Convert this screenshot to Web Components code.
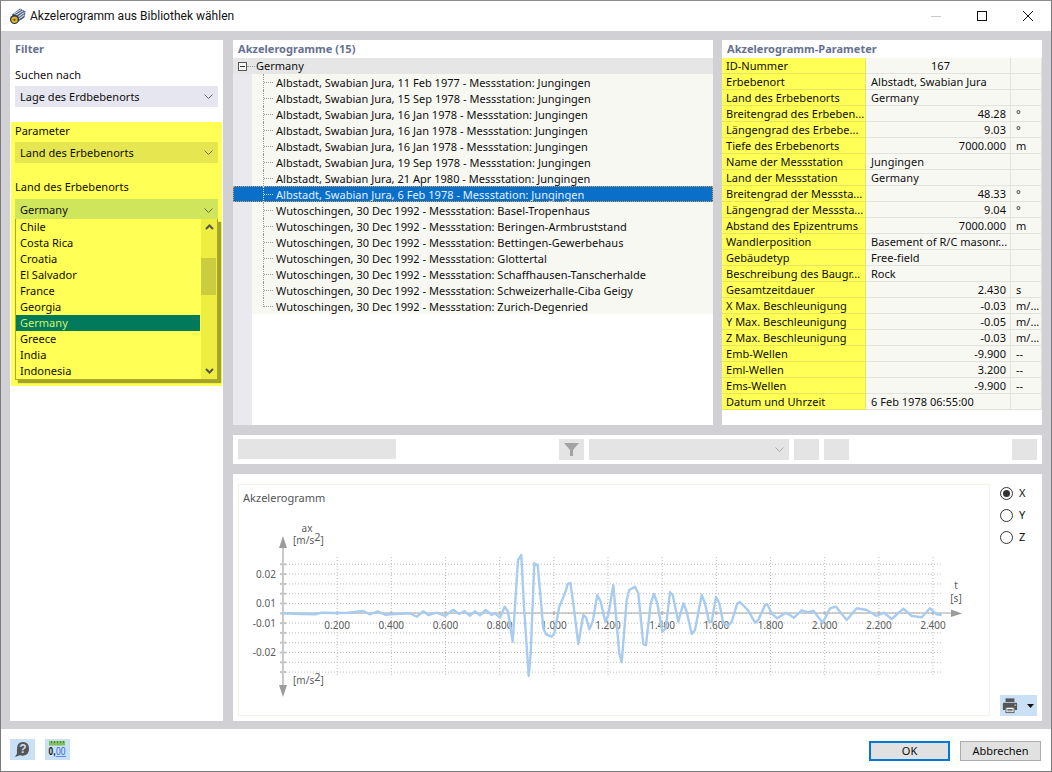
<!DOCTYPE html>
<html lang="de">
<head>
<meta charset="utf-8" />
<title>Akzelerogramm aus Bibliothek wählen</title>
<style>
  html, body { margin: 0; padding: 0; background: #d1d0d5; }
  body { font: 11px/16px "Noto Sans", "Liberation Sans", sans-serif; color: #0e0e0e; letter-spacing: 0.02px; }
</style>
</head>
<body>
<akz-dialog>
  <akz-filter slot="filter"></akz-filter>
  <akz-tree slot="tree"></akz-tree>
  <akz-params slot="params"></akz-params>
  <akz-tools slot="tools"></akz-tools>
  <akz-chart slot="chart"></akz-chart>
  <akz-footer slot="footer"></akz-footer>
</akz-dialog>

<template id="dialog-tpl">
  <style>
    :host { display: flex; flex-direction: column; width: 1052px; height: 772px; box-sizing: border-box;
            border: 1px solid #7b7b7b; border-top-color: #8c8c8c; background: #d1d0d5; overflow: hidden; }
    .title { display: flex; align-items: center; height: 30px; background: #fff; flex: none; }
    .title svg.app { margin: 0 4px 0 8px; }
    .title span { flex: 1; font: 12px Roboto, "Noto Sans", sans-serif; color: #111; }
    .wbtn { width: 46px; height: 30px; display: flex; align-items: center; justify-content: center; }
    .main { flex: 1; display: grid; grid-template-columns: 213px 490px 329px; grid-template-rows: 385px 286px;
            row-gap: 10px; padding: 9px 9px 8px 9px; }
    ::slotted([slot=filter]) { grid-row: 1 / 3; }
    ::slotted([slot=tree]) { margin-left: 10px; }
    ::slotted([slot=params]) { margin-left: 9px; }
    .wide { grid-column: 2 / 4; margin-left: 10px; display: grid; grid-template-rows: 29px 247px; row-gap: 10px; }
  </style>
  <div class="title">
    <svg class="app" width="17" height="17" viewBox="0 0 17 17">
      <path d="M3 6.500L11 .5L16.500 3.500L15.500 9.500L7 15Z" fill="#46597a"/>
      <path d="M5 6L12 1.500M6.500 7.500L14 2.800M8 9.500L15.500 4.500M9.500 11L15.300 7" stroke="#c9d3e2" stroke-width="1.1"/>
      <circle cx="5.500" cy="11.500" r="4.500" fill="#26344a"/>
      <circle cx="5.500" cy="11.800" r="3.200" fill="#e3b225"/>
      <circle cx="5.500" cy="11.800" r="1.100" fill="#5b4a12"/>
    </svg>
    <span>Akzelerogramm aus Bibliothek wählen</span>
    <div class="wbtn"><svg width="10" height="10"><path d="M0 5.500H10" stroke="#c8c8c8"/></svg></div>
    <div class="wbtn"><svg width="10" height="10"><rect x=".5" y=".5" width="9" height="9" fill="none" stroke="#111"/></svg></div>
    <div class="wbtn"><svg width="10" height="10"><path d="M0 0L10 10M10 0L0 10" stroke="#111"/></svg></div>
  </div>
  <div class="main">
    <slot name="filter"></slot>
    <slot name="tree"></slot>
    <slot name="params"></slot>
    <div class="wide">
      <slot name="tools"></slot>
      <slot name="chart"></slot>
    </div>
  </div>
  <slot name="footer"></slot>
</template>

<script>
  const stamp = (host, id) => {
    const shadow = host.attachShadow({ mode: "open" });
    shadow.appendChild(document.getElementById(id).content.cloneNode(true));
    return shadow;
  };
  const chevron = '<svg width="9" height="5" viewBox="0 0 9 5"><path d="M.5 .5L4.500 4.500L8.500 .5" fill="none" stroke="currentColor"/></svg>';

  class AkzDialog extends HTMLElement {
    constructor() {
      super();
      stamp(this, "dialog-tpl");
    }
  }

  // dropdown field, background comes from the user via --combo-bg
  class AkzCombo extends HTMLElement {
    constructor() {
      super();
      this.attachShadow({ mode: "open" }).innerHTML = `
        <style>
          :host { display: flex; align-items: center; height: var(--combo-h, 21px); box-sizing: border-box;
                  padding: var(--combo-pt, 0) 5px 0; background: var(--combo-bg, #e6e6f0); }
          .t { flex: 1; white-space: nowrap; }
          .c { color: var(--combo-arrow, #666); display: flex; }
        </style>
        <span class="t"><slot></slot></span><span class="c">${chevron}</span>`;
    }
  }

  class AkzFilter extends HTMLElement {
    constructor() {
      super();
      const countries = ["Chile", "Costa Rica", "Croatia", "El Salvador", "France", "Georgia", "Germany", "Greece", "India", "Indonesia"];
      const items = countries.map(c => `<div class="it ${c === "Germany" ? "sel" : ""}">${c}</div>`).join("");
      this.attachShadow({ mode: "open" }).innerHTML = `
        <style>
          :host { display: block; background: #fff; padding: 0 5px; box-sizing: border-box; }
          .head { height: 17px; font-weight: 700; color: #66718f; line-height: 17px; }
          .lab { height: 16px; margin-bottom: 3px; }
          .first { margin-top: 10px; }
          .hi { background: #ffff55; margin: 15px -4px 0; padding: 1px 4px 0; height: 264px; box-sizing: border-box; }
          .hi .second { margin-top: 16px; margin-bottom: 4px; }
          .y1 { --combo-bg: #e6e650; --combo-arrow: #77772a; }
          .y2 { --combo-bg: #cfe65c; --combo-arrow: #66702a; --combo-h: 20px; --combo-pt: 2px; }
          .list { display: flex; height: 161px; box-sizing: border-box; border: 1px solid #a9a930; border-top: 0;
                  box-shadow: 3px 3px 1px #a3a32a; background: #ffff55; }
          .items { flex: 1; }
          .it { height: 16px; padding-left: 4px; margin-right: 1px; }
          .it.sel { background: #007a5a; color: #d8ef6a; }
          .bar { width: 16px; background: #eeee40; display: flex; flex-direction: column; align-items: center; position: relative; }
          .thumb { position: absolute; left: 0; right: 1px; top: 39px; height: 37px; background: #cccc40; }
          .ar { height: 16px; display: flex; align-items: center; position: relative; }
          .sp { flex: 1; }
        </style>
        <div class="head">Filter</div>
        <div class="lab first">Suchen nach</div>
        <akz-combo>Lage des Erdbebenorts</akz-combo>
        <div class="hi">
          <div class="lab">Parameter</div>
          <akz-combo class="y1">Land des Erbebenorts</akz-combo>
          <div class="lab second">Land des Erbebenorts</div>
          <akz-combo class="y2">Germany</akz-combo>
          <div class="list">
            <div class="items">${items}</div>
            <div class="bar">
              <div class="thumb"></div>
              <div class="ar"><svg width="9" height="6" viewBox="0 0 9 6"><path d="M1 5L4.500 1.500L8 5" fill="none" stroke="#555" stroke-width="2"/></svg></div>
              <div class="sp"></div>
              <div class="ar"><svg width="9" height="6" viewBox="0 0 9 6"><path d="M1 1L4.500 4.500L8 1" fill="none" stroke="#555" stroke-width="2"/></svg></div>
            </div>
          </div>
        </div>`;
    }
  }

  class AkzTree extends HTMLElement {
    constructor() {
      super();
      const a = "Albstadt, Swabian Jura, ";
      const w = "Wutoschingen, 30 Dec 1992 - Messstation: ";
      const j = " - Messstation: Jungingen";
      const rows = [
        a + "11 Feb 1977" + j, a + "15 Sep 1978" + j, a + "16 Jan 1978" + j, a + "16 Jan 1978" + j,
        a + "16 Jan 1978" + j, a + "19 Sep 1978" + j, a + "21 Apr 1980" + j, a + "6 Feb 1978" + j,
        w + "Basel-Tropenhaus", w + "Beringen-Armbruststand", w + "Bettingen-Gewerbehaus", w + "Glottertal",
        w + "Schaffhausen-Tanscherhalde", w + "Schweizerhalle-Ciba Geigy", w + "Zurich-Degenried"
      ];
      const html = rows.map((r, i) => `
        <div class="row ${i === 7 ? "sel" : ""} ${i === rows.length - 1 ? "last" : ""}">
          <div class="gut"></div>
          <div class="cell"><i class="con"></i><span>${r}</span></div>
        </div>`).join("");
      this.attachShadow({ mode: "open" }).innerHTML = `
        <style>
          :host { display: flex; flex-direction: column; background: #fff; }
          .head { height: 18px; line-height: 18px; font-weight: 700; color: #66718f; padding-left: 5px; flex: none; }
          .root { height: 16px; line-height: 18px; background: #e6e6e6; display: flex; align-items: center; flex: none; }
          .box { width: 9px; height: 9px; box-sizing: border-box; border: 1px solid #555; margin-left: 5px; display: flex; align-items: center; justify-content: center; background: #f4f4f4; }
          .box::after { content: ""; width: 5px; height: 1px; background: #333; }
          .dots { width: 8px; border-top: 1px dotted #999; margin-right: 1px; }
          .row { display: flex; height: 16px; line-height: 18px; flex: none; white-space: nowrap; }
          .gut { width: 19px; background: #e9e9ee; flex: none; }
          .cell { flex: 1; background: #f8f8f3; display: flex; }
          .con { display: block; width: 10px; height: 16px; margin-left: 11px; margin-right: 3px; flex: none; border-left: 1px dotted #999; box-sizing: border-box; position: relative; }
          .con::after { content: ""; position: absolute; left: 0; right: 0; top: 8px; border-top: 1px dotted #999; }
          .last .con { height: 9px; }
          .sel { outline: 1px dotted #e0a050; outline-offset: -1px; }
          .sel .gut, .sel .cell { background: #0a6fc9; }
          .sel span { color: #e4f0ff; }
          .sel .con, .sel .con::after { border-color: #cfe2f6; }
          .fill { flex: 1; display: flex; }
        </style>
        <div class="head">Akzelerogramme (15)</div>
        <div class="root"><span class="box"></span><span class="dots"></span><span>Germany</span></div>
        ${html}
        <div class="fill"><div class="gut"></div></div>`;
    }
  }

  class AkzParams extends HTMLElement {
    constructor() {
      super();
      const data = [
        ["ID-Nummer", "167", "", "c"], ["Erbebenort", "Albstadt, Swabian Jura", "", "l"], ["Land des Erbebenorts", "Germany", "", "l"],
        ["Breitengrad des Erbeben...", "48.28", "°", "r"], ["Längengrad des Erbebe...", "9.03", "°", "r"], ["Tiefe des Erbebenorts", "7000.000", "m", "r"],
        ["Name der Messstation", "Jungingen", "", "l"], ["Land der Messstation", "Germany", "", "l"],
        ["Breitengrad der Messsta...", "48.33", "°", "r"], ["Längengrad der Messsta...", "9.04", "°", "r"], ["Abstand des Epizentrums", "7000.000", "m", "r"],
        ["Wandlerposition", "Basement of R/C masonr...", "", "l"], ["Gebäudetyp", "Free-field", "", "l"], ["Beschreibung des Baugr...", "Rock", "", "l"],
        ["Gesamtzeitdauer", "2.430", "s", "r"], ["X Max. Beschleunigung", "-0.03", "m/...", "r"], ["Y Max. Beschleunigung", "-0.05", "m/...", "r"],
        ["Z Max. Beschleunigung", "-0.03", "m/...", "r"], ["Emb-Wellen", "-9.900", "--", "r"], ["Eml-Wellen", "3.200", "--", "r"],
        ["Ems-Wellen", "-9.900", "--", "r"], ["Datum und Uhrzeit", "6 Feb 1978 06:55:00", "", "l"]
      ];
      const rows = data.map(d => `<div class="k">${d[0]}</div><div class="v ${d[3]}">${d[1]}</div><div class="u">${d[2]}</div>`).join("");
      this.attachShadow({ mode: "open" }).innerHTML = `
        <style>
          :host { display: block; background: #fff; }
          .head { height: 18px; line-height: 18px; font-weight: 700; color: #66718f; padding-left: 5px; }
          .grid { display: grid; grid-template-columns: 144px 145px 31px; grid-auto-rows: 16px; line-height: 16px; white-space: nowrap; }
          .grid > div { box-sizing: border-box; border-bottom: 1px solid #e2e2de; border-right: 1px solid #e2e2de; overflow: hidden; }
          .k { background: #ffff55; padding-left: 4px; border-color: #e6e660 !important; }
          .v { background: #f8f8f3; padding: 0 4px 0 5px; }
          .u { background: #f8f8f3; padding-left: 5px; }
          .r { text-align: right; }
          .c { text-align: center; padding-left: 9px; }
        </style>
        <div class="head">Akzelerogramm-Parameter</div>
        <div class="grid">${rows}</div>`;
    }
  }

  class AkzTools extends HTMLElement {
    constructor() {
      super();
      this.attachShadow({ mode: "open" }).innerHTML = `
        <style>
          :host { display: flex; align-items: flex-start; background: #fff; padding: 4px 5px 0; box-sizing: border-box; }
          .inp { width: 158px; height: 20px; background: #e4e4e4; }
          .b { width: 25px; height: 21px; background: #e4e4e4; display: flex; align-items: center; justify-content: center; }
          .funnel { margin-left: 163px; }
          .gap { margin-left: 5px; }
          akz-combo { width: 200px; margin-left: 5px; --combo-bg: #e4e4e4; --combo-arrow: #aaa; }
          .end { margin-left: auto; }
        </style>
        <div class="inp"></div>
        <div class="b funnel"><svg width="15" height="13" viewBox="0 0 15 13"><path d="M0 0H15L9 7V13H6V7Z" fill="#a3a3a3"/></svg></div>
        <akz-combo></akz-combo>
        <div class="b gap"></div>
        <div class="b gap"></div>
        <div class="b end"></div>`;
    }
  }

  class AkzRadio extends HTMLElement {
    constructor() {
      super();
      const on = this.hasAttribute("checked");
      this.attachShadow({ mode: "open" }).innerHTML = `
        <style>
          :host { display: flex; align-items: center; height: 16px; }
          svg { margin-right: 6px; }
        </style>
        <svg width="13" height="13" viewBox="0 0 13 13"><circle cx="6.500" cy="6.500" r="6" fill="#fff" stroke="#333"/>${on ? '<circle cx="6.500" cy="6.500" r="3.500" fill="#333"/>' : ""}</svg>
        <span><slot></slot></span>`;
    }
  }

  class AkzChart extends HTMLElement {
    constructor() {
      super();
      // wave, read off in 3x crops of the plot, so [zoomed x, zoomed y] per origin
      const read = (ox, oy, pts) => pts.map(p => [ox + p[0] / 3, oy + p[1] / 3]);
      const wave = [
        ...read(235, 480, [[143,400],[200,402],[240,403],[260,398],[300,399],[340,398],[385,393],[405,403],[428,394],[450,404],[480,402],[500,401],[525,400],[545,410],[565,394],[580,405],[605,398],[630,408],[655,389],[672,402],[688,394],[705,407],[720,394],[735,406],[752,390],[770,405],[780,400],[795,413]]),
        ...read(500, 540, [[14,200],[24,215],[38,305],[54,60],[64,45],[72,200],[86,408],[92,340],[103,70],[113,75],[130,265],[138,283],[155,290],[163,280],[178,200],[195,160],[203,132],[211,128],[220,190],[235,312],[250,225],[258,232],[268,268],[278,245],[292,165],[302,185],[316,245],[325,225],[340,135],[350,250],[358,340],[365,367],[380,180],[388,150],[405,140],[415,160],[430,312],[438,316],[452,190],[462,162],[472,190],[487,275],[497,265],[510,157],[518,165],[535,245],[550,190],[560,215],[575,282],[585,270],[605,165],[615,190],[627,245],[635,245],[648,170],[658,190],[670,250],[685,257],[695,245],[712,190],[720,186],[735,202],[745,212],[765,248],[775,240],[795,195]]),
        ...read(760, 470, [[22,403],[35,430],[52,445],[78,428],[102,443],[125,421],[145,427],[160,422],[188,458],[210,415],[228,410],[260,450],[290,415],[320,420],[350,438],[372,428],[395,447],[430,416],[455,438],[485,442],[510,415],[530,433],[545,435]])
      ].map(p => p[0].toFixed(1) + "," + p[1].toFixed(1)).join(" ");

      let grid = "";
      for (let i = 0; i < 12; i++) {
        const y = 564.3 + i * 9.8;
        grid += `<path d="M283 ${y.toFixed(1)}H941" class="g"/><path d="M280 ${y.toFixed(1)}H286" stroke="#c4c4c4" stroke-width="2"/>`;
      }
      let xl = "";
      for (let i = 1; i <= 12; i++) {
        const x = 283 + i * 54.17;
        grid += `<path d="M${x.toFixed(1)} 557V676" class="g"/><path d="M${x.toFixed(1)} 611V615" stroke="#c4c4c4" stroke-width="2"/>`;
        xl += `<text x="${x.toFixed(1)}" y="629" text-anchor="middle">${(i * 0.2).toFixed(3)}</text>`;
      }
      this.attachShadow({ mode: "open" }).innerHTML = `
        <style>
          :host { display: flex; background: #fff; padding: 10px 5px 5px; box-sizing: border-box; }
          .plot { width: 752px; height: 232px; box-sizing: border-box; flex: none; border: 1px solid #f3f3e8; overflow: hidden; }
          svg.p { display: block; width: 752px; height: 232px; margin: -1px; }
          text { font: 10px "Noto Sans", "Liberation Sans", sans-serif; fill: #5c5c5c; }
          .g { stroke: #bcbcbc; stroke-dasharray: 1 2; fill: none; }
          .side { flex: 1; margin-left: 10px; padding-top: 1px; display: flex; flex-direction: column; gap: 6px; }
          .print { margin-top: auto; height: 21px; background: #c9e0f5; display: flex; align-items: center; padding-left: 2px; gap: 9px; }
        </style>
        <div class="plot">
          <svg class="p" viewBox="238 484 752 232">
            <text x="243" y="502" style="font-size:11px;fill:#555">Akzelerogramm</text>
            ${grid}
            <path d="M283 545V688" stroke="#c8c8c8" stroke-width="2"/>
            <path d="M279 548L283 536L287 548Z M279 685L283 697L287 685Z" fill="#9c9c9c"/>
            <path d="M283 613H952" stroke="#a6a6a6" stroke-width="1.2"/>
            <path d="M951 609.500L962 613.500L951 617Z" fill="#9c9c9c"/>
            <text x="307" y="532" text-anchor="middle">ax</text>
            <text x="293" y="544">[m/s<tspan font-size="11" dy="-3">2</tspan><tspan dy="3">]</tspan></text>
            <text x="293" y="684">[m/s<tspan font-size="11" dy="-3">2</tspan><tspan dy="3">]</tspan></text>
            <text x="276" y="578" text-anchor="end">0.02</text>
            <text x="276" y="607" text-anchor="end">0.01</text>
            <text x="276" y="627" text-anchor="end">-0.01</text>
            <text x="276" y="656" text-anchor="end">-0.02</text>
            ${xl}
            <text x="956" y="589" text-anchor="middle">t</text>
            <text x="956" y="602" text-anchor="middle">[s]</text>
            <polyline points="${wave}" fill="none" stroke="#a8ccf0" stroke-width="2.400" stroke-linejoin="round"/>
          </svg>
        </div>
        <div class="side">
          <akz-radio checked>X</akz-radio>
          <akz-radio>Y</akz-radio>
          <akz-radio>Z</akz-radio>
          <div class="print">
            <svg width="16" height="17" viewBox="0 0 18 18">
              <rect x="4" y="1" width="10" height="4" fill="#555"/>
              <path d="M1 7Q1 6 2 6H16Q17 6 17 7V14H14V11H4V14H1Z" fill="#555"/>
              <rect x="4.500" y="11" width="9" height="6" fill="#fff" stroke="#555"/>
              <path d="M6 13.500H12M6 15H12" stroke="#555"/>
              <rect x="14" y="8" width="2" height="1" fill="#fff"/>
            </svg>
            <svg width="7" height="4" viewBox="0 0 7 4"><path d="M0 0H7L3.500 4Z" fill="#111"/></svg>
          </div>
        </div>`;
    }
  }

  class AkzFooter extends HTMLElement {
    constructor() {
      super();
      this.attachShadow({ mode: "open" }).innerHTML = `
        <style>
          :host { display: flex; align-items: flex-start; height: 42px; background: #fff; padding: 10px 10px 0 9px; box-sizing: border-box; flex: none; }
          .ic { width: 25px; height: 21px; background: #c9e0f5; margin-right: 10px; display: block; }
          .ic text { font-family: "Liberation Sans", sans-serif; }
          .sp { flex: 1; }
          button { width: 81px; height: 20px; margin: 2px 0 0 10px; font: inherit; line-height: 16px; color: inherit; background: #e1e1e1; border: 1px solid #adadad; padding: 0; }
          button.ok { border: 2px solid #0078d7; }
        </style>
        <svg class="ic" viewBox="0 0 25 21">
          <path d="M7 14.500L5 18L10 16.300Q12.500 17 14 16.500Q19 15.500 19 10Q19 3 13 3Q7 3 7 10Q6.800 12.500 7 14.500Z" fill="#555"/>
          <text x="13" y="14.300" font-size="12" font-weight="700" text-anchor="middle" fill="#c9e0f5">?</text>
        </svg>
        <svg class="ic" viewBox="0 0 25 21">
          <rect x="4" y="2" width="16" height="4.500" fill="#7fc05a"/>
          <path d="M6.500 2V4M9.500 2V4M12.500 2V4M15.500 2V4M18.500 2V4" stroke="#4d8a30"/>
          <text x="3.500" y="16" font-size="11" font-weight="700" fill="#111" textLength="7" lengthAdjust="spacingAndGlyphs">0,</text>
          <text x="11" y="16" font-size="11" fill="#2f66d8" textLength="9.500" lengthAdjust="spacingAndGlyphs">00</text>
          <path d="M11 17.500H21" stroke="#5c8ae0"/>
        </svg>
        <div class="sp"></div>
        <button class="ok">OK</button>
        <button>Abbrechen</button>`;
    }
  }

  customElements.define("akz-combo", AkzCombo);
  customElements.define("akz-radio", AkzRadio);
  customElements.define("akz-filter", AkzFilter);
  customElements.define("akz-tree", AkzTree);
  customElements.define("akz-params", AkzParams);
  customElements.define("akz-tools", AkzTools);
  customElements.define("akz-chart", AkzChart);
  customElements.define("akz-footer", AkzFooter);
  customElements.define("akz-dialog", AkzDialog);
</script>
</body>
</html>
